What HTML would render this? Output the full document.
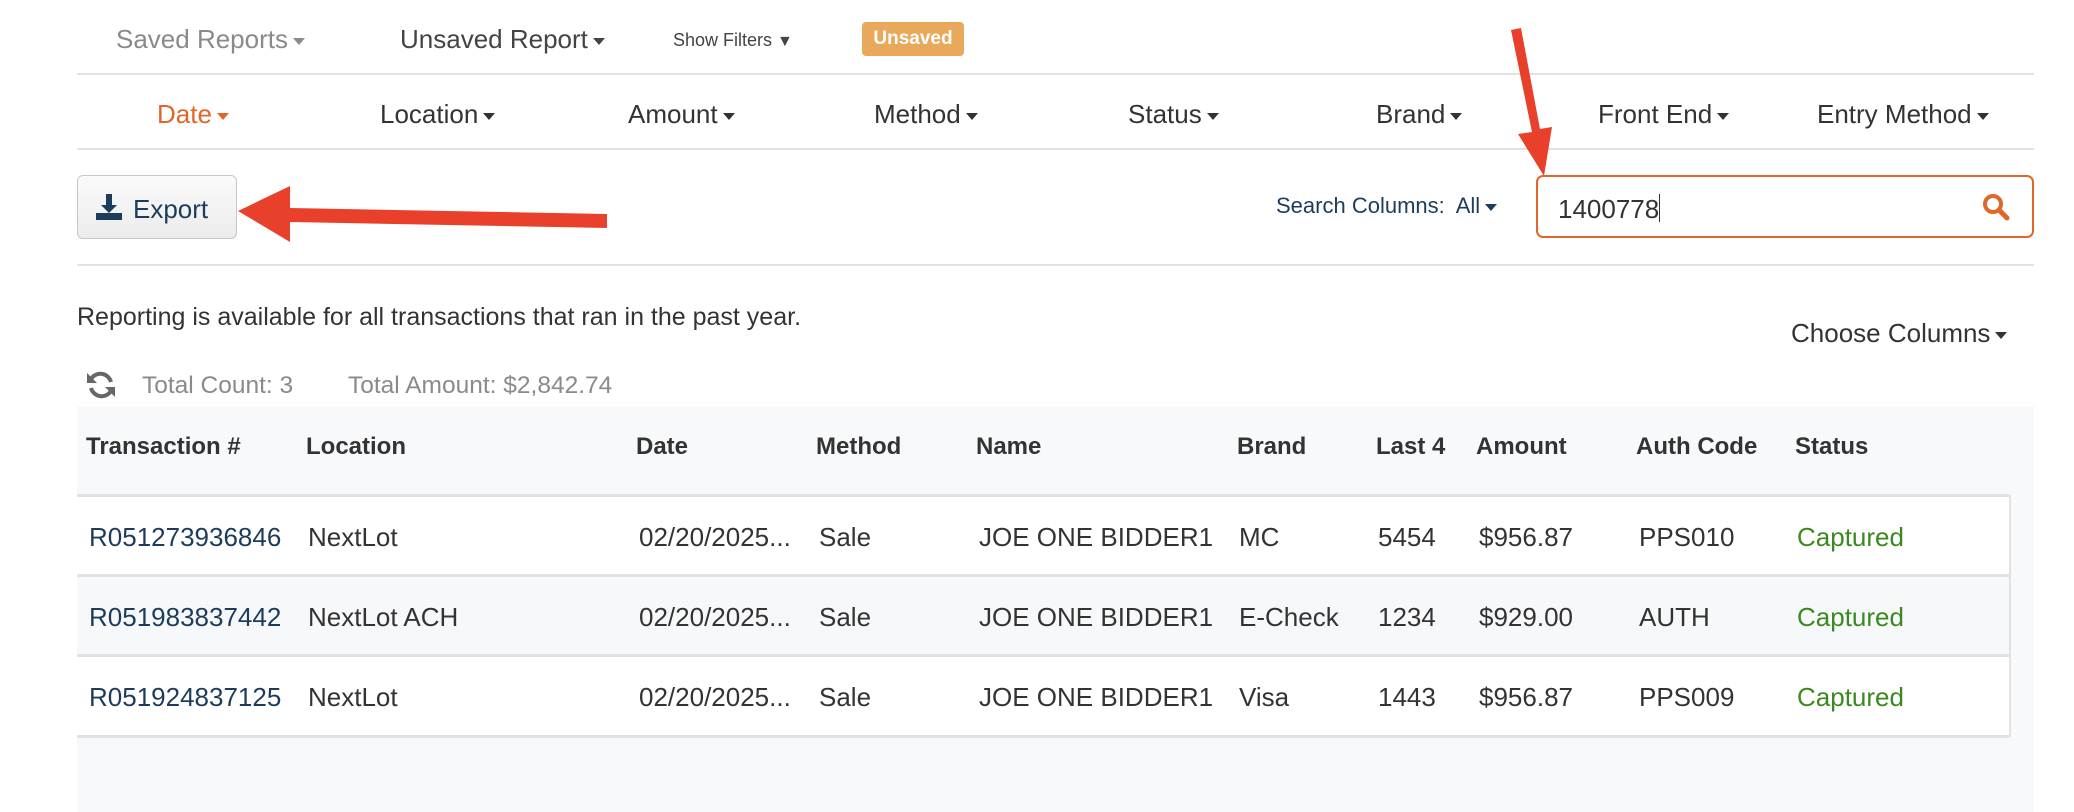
<!DOCTYPE html>
<html><head><meta charset="utf-8"><style>
body{margin:0;width:2074px;height:812px;background:#fff;position:relative;overflow:hidden;font-family:"Liberation Sans",sans-serif;color:#333}
.a{position:absolute;white-space:nowrap;line-height:1}
.c{display:inline-block;width:0;height:0;border-left:6px solid transparent;border-right:6px solid transparent;border-top:7px solid currentColor;vertical-align:middle;margin-left:5px}
.hl{position:absolute;left:77px;width:1957px;height:2px;background:#e2e2e2}
.f{font-size:26px;top:101px}
.t{font-size:26px}
.h{font-weight:bold;font-size:24px;top:435px;color:#333}
.n{color:#1d3c5c}.g{color:#3a8a1f}
</style></head><body>
<div class="a" style="left:116px;top:26px;font-size:26px;color:#8a8a8a">Saved Reports<span class="c"></span></div>
<div class="a" style="left:400px;top:26px;font-size:26px;color:#444">Unsaved Report<span class="c"></span></div>
<div class="a" style="left:673px;top:31px;font-size:18px;color:#444">Show Filters <span style="font-size:16px">&#9660;</span></div>
<div class="a" style="left:862px;top:22px;width:102px;height:34px;background:#e8a95a;border-radius:4px;color:#fff;font-weight:bold;font-size:19px;text-align:center;line-height:34px">Unsaved</div>
<div class="hl" style="top:73px"></div>
<div class="a f" style="left:157px;color:#e0662b">Date<span class="c"></span></div>
<div class="a f" style="left:380px">Location<span class="c"></span></div>
<div class="a f" style="left:628px">Amount<span class="c"></span></div>
<div class="a f" style="left:874px">Method<span class="c"></span></div>
<div class="a f" style="left:1128px">Status<span class="c"></span></div>
<div class="a f" style="left:1376px">Brand<span class="c"></span></div>
<div class="a f" style="left:1598px">Front End<span class="c"></span></div>
<div class="a f" style="left:1817px">Entry Method<span class="c"></span></div>
<div class="hl" style="top:148px"></div>
<div class="a" style="left:77px;top:175px;width:160px;height:64px;border:1px solid #c8c8c8;border-radius:6px;background:linear-gradient(#fafafa,#ececec);box-sizing:border-box"></div>
<svg class="a" style="left:96px;top:194px" width="26" height="26" viewBox="0 0 26 26"><path d="M10 0h6v11h5l-8 8-8-8h5z" fill="#1d3c5c"/><rect x="0" y="19" width="26" height="7" fill="#1d3c5c"/></svg>
<div class="a" style="left:133px;top:196px;font-size:26px;color:#1d3c5c">Export</div>
<svg class="a" style="left:0;top:0" width="2074" height="812"><path d="M607 214 L290 208 L290 186 L238 211 L290 242 L290 222 L607 228Z" fill="#e8402a"/><path d="M1511 30 L1532 132 L1518 134 L1544 176 L1552 127 L1540 129 L1521 28Z" fill="#e8402a"/></svg>
<div class="a" style="left:1276px;top:195px;font-size:22px;color:#1d3c5c">Search Columns:&nbsp; All<span class="c"></span></div>
<div class="a" style="left:1536px;top:175px;width:498px;height:63px;border:2px solid #e0662b;border-radius:7px;box-sizing:border-box"></div>
<div class="a" style="left:1558px;top:194px;font-size:26px;color:#333">1400778<span style="display:inline-block;width:1px;height:28px;background:#333;vertical-align:-4px"></span></div>
<svg class="a" style="left:1982px;top:193px" width="28" height="28" viewBox="0 0 28 28"><circle cx="11" cy="11" r="8" fill="none" stroke="#e0662b" stroke-width="4"/><path d="M17 17l8 8" stroke="#e0662b" stroke-width="5" stroke-linecap="round"/></svg>
<div class="hl" style="top:264px"></div>
<div class="a" style="left:77px;top:305px;font-size:25px;color:#333">Reporting is available for all transactions that ran in the past year.</div>
<div class="a" style="left:1791px;top:320px;font-size:26px;color:#333">Choose Columns<span class="c"></span></div>
<svg class="a" style="left:86px;top:370px" width="30" height="30" viewBox="0 0 30 30"><path d="M25 12A11 11 0 0 0 5 9" fill="none" stroke="#666" stroke-width="4"/><path d="M1 3v10h10z" fill="#666"/><path d="M5 18a11 11 0 0 0 20 3" fill="none" stroke="#666" stroke-width="4"/><path d="M29 27V17H19z" fill="#666"/></svg>
<div class="a" style="left:142px;top:374px;font-size:24.5px;color:#8a8a8a">Total Count: 3</div>
<div class="a" style="left:348px;top:374px;font-size:24.5px;color:#8a8a8a">Total Amount: $2,842.74</div>
<div class="a" style="left:77px;top:406px;width:1957px;height:406px;background:#f8f9fa"></div>
<div class="a" style="left:77px;top:495px;width:1932px;height:242px;background:#fff;border-right:2px solid #e2e2e2"></div>
<div class="a" style="left:77px;top:576px;width:1932px;height:79px;background:#f7f8fa"></div>
<div class="hl" style="top:494px;width:1932px;height:3px"></div>
<div class="hl" style="top:574px;width:1932px;height:3px"></div>
<div class="hl" style="top:654px;width:1932px;height:3px"></div>
<div class="hl" style="top:735px;width:1932px;height:3px"></div>
<div class="a h" style="left:86px">Transaction #</div>
<div class="a h" style="left:306px">Location</div>
<div class="a h" style="left:636px">Date</div>
<div class="a h" style="left:816px">Method</div>
<div class="a h" style="left:976px">Name</div>
<div class="a h" style="left:1237px">Brand</div>
<div class="a h" style="left:1376px">Last 4</div>
<div class="a h" style="left:1476px">Amount</div>
<div class="a h" style="left:1636px">Auth Code</div>
<div class="a h" style="left:1795px">Status</div>
<div style="position:absolute;top:524px;left:0">
<div class="a t n" style="left:89px">R051273936846</div><div class="a t" style="left:308px">NextLot</div><div class="a t" style="left:639px">02/20/2025...</div><div class="a t" style="left:819px">Sale</div><div class="a t" style="left:979px">JOE ONE BIDDER1</div><div class="a t" style="left:1239px">MC</div><div class="a t" style="left:1378px">5454</div><div class="a t" style="left:1479px">$956.87</div><div class="a t" style="left:1639px">PPS010</div><div class="a t g" style="left:1797px">Captured</div></div>
<div style="position:absolute;top:604px;left:0">
<div class="a t n" style="left:89px">R051983837442</div><div class="a t" style="left:308px">NextLot ACH</div><div class="a t" style="left:639px">02/20/2025...</div><div class="a t" style="left:819px">Sale</div><div class="a t" style="left:979px">JOE ONE BIDDER1</div><div class="a t" style="left:1239px">E-Check</div><div class="a t" style="left:1378px">1234</div><div class="a t" style="left:1479px">$929.00</div><div class="a t" style="left:1639px">AUTH</div><div class="a t g" style="left:1797px">Captured</div></div>
<div style="position:absolute;top:684px;left:0">
<div class="a t n" style="left:89px">R051924837125</div><div class="a t" style="left:308px">NextLot</div><div class="a t" style="left:639px">02/20/2025...</div><div class="a t" style="left:819px">Sale</div><div class="a t" style="left:979px">JOE ONE BIDDER1</div><div class="a t" style="left:1239px">Visa</div><div class="a t" style="left:1378px">1443</div><div class="a t" style="left:1479px">$956.87</div><div class="a t" style="left:1639px">PPS009</div><div class="a t g" style="left:1797px">Captured</div></div>
</body></html>
